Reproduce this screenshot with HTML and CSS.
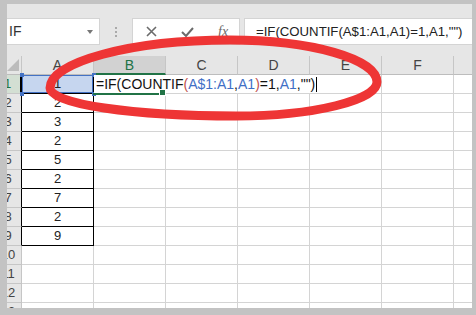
FILE: index.html
```html
<!DOCTYPE html>
<html lang="en">
<head>
    <meta charset="UTF-8">
    <meta name="viewport" content="width=device-width, initial-scale=1.0">
    <title>COUNTIF dedupe</title>
    <link rel="stylesheet" href="styles.css">
</head>
<body>
    <div class="window">
        <div class="toolbar">
            <div class="name-box">IF<span class="drop"></span></div>
            <div class="grip"><i></i><i></i><i></i></div>
            <div class="fx-buttons">
                <svg width="11" height="11" viewBox="0 0 11 11"><path d="M1 1 L10 10 M10 1 L1 10" stroke="#6b6b6b" stroke-width="1.6" fill="none"/></svg>
                <svg width="13" height="10" viewBox="0 0 13 10"><path d="M1 5 L5 9 L12 1" stroke="#6b6b6b" stroke-width="2" fill="none"/></svg>
                <span class="fx">fx</span>
            </div>
            <div class="formula-box">=IF(COUNTIF(A$1:A1,A1)=1,A1,"")</div>
        </div>

        <div class="sheet">
            <div class="row head">
                <div class="rh corner"><span class="tri"></span></div>
                <div class="ch">A</div>
                <div class="ch sel">B</div>
                <div class="ch">C</div>
                <div class="ch">D</div>
                <div class="ch">E</div>
                <div class="ch">F</div>
                <div class="ch">G</div>
            </div>
            <div class="row box">
                <div class="rh sel">1</div>
                <div class="c a a1">1<i class="h tl"></i><i class="h tr"></i><i class="h bl"></i><i class="h br"></i></div>
                <div class="c b1"><span class="edit">=IF(COUNTIF<span class="p">(</span><span class="r">A$1:A1</span>,<span class="r">A1</span><span class="p">)</span>=1,<span class="r">A1</span>,"")<i class="caret"></i></span></div>
                <div class="c"></div><div class="c"></div><div class="c"></div><div class="c"></div><div class="c"></div>
            </div>
            <div class="row box"><div class="rh">2</div><div class="c a">2</div><div class="c"></div><div class="c"></div><div class="c"></div><div class="c"></div><div class="c"></div><div class="c"></div></div>
            <div class="row box"><div class="rh">3</div><div class="c a">3</div><div class="c"></div><div class="c"></div><div class="c"></div><div class="c"></div><div class="c"></div><div class="c"></div></div>
            <div class="row box"><div class="rh">4</div><div class="c a">2</div><div class="c"></div><div class="c"></div><div class="c"></div><div class="c"></div><div class="c"></div><div class="c"></div></div>
            <div class="row box"><div class="rh">5</div><div class="c a">5</div><div class="c"></div><div class="c"></div><div class="c"></div><div class="c"></div><div class="c"></div><div class="c"></div></div>
            <div class="row box"><div class="rh">6</div><div class="c a">2</div><div class="c"></div><div class="c"></div><div class="c"></div><div class="c"></div><div class="c"></div><div class="c"></div></div>
            <div class="row box"><div class="rh">7</div><div class="c a">7</div><div class="c"></div><div class="c"></div><div class="c"></div><div class="c"></div><div class="c"></div><div class="c"></div></div>
            <div class="row box"><div class="rh">8</div><div class="c a">2</div><div class="c"></div><div class="c"></div><div class="c"></div><div class="c"></div><div class="c"></div><div class="c"></div></div>
            <div class="row box"><div class="rh">9</div><div class="c a">9</div><div class="c"></div><div class="c"></div><div class="c"></div><div class="c"></div><div class="c"></div><div class="c"></div></div>
            <div class="row"><div class="rh">10</div><div class="c"></div><div class="c"></div><div class="c"></div><div class="c"></div><div class="c"></div><div class="c"></div><div class="c"></div></div>
            <div class="row"><div class="rh">11</div><div class="c"></div><div class="c"></div><div class="c"></div><div class="c"></div><div class="c"></div><div class="c"></div><div class="c"></div></div>
            <div class="row"><div class="rh">12</div><div class="c"></div><div class="c"></div><div class="c"></div><div class="c"></div><div class="c"></div><div class="c"></div><div class="c"></div></div>
            <div class="row"><div class="rh">13</div><div class="c"></div><div class="c"></div><div class="c"></div><div class="c"></div><div class="c"></div><div class="c"></div><div class="c"></div></div>
        </div>
    </div>

    <!-- hand drawn marker around the formula -->
    <svg class="mark" width="476" height="315" viewBox="0 0 476 315">
        <path d="M50 88 C50 62 131 40 230 40 C311 40 377 59 377 82 C377 100 314 116 236 116 C133 116 50 104 50 88 Z" fill="none" stroke="#ee3535" stroke-width="9"/>
    </svg>
</body>
</html>
```

FILE: styles.css
```css
body {
    margin: 0;
    width: 476px;
    height: 315px;
    background-color: #c3c3c3;
    font-family: "Liberation Sans", Arial, sans-serif;
    color: #222;
    overflow: hidden;
    position: relative;
}

.window {
    margin: 4px 4px 0 7px;
    height: 304px;
    background-color: #fff;
    overflow: hidden;
}

/* formula bar */
.toolbar {
    height: 52px;
    background-color: #e6e6e6;
    display: flex;
    align-items: flex-start;
    padding-top: 14px;
    box-sizing: border-box;
}

.name-box {
    margin-left: -15px;
    width: 108px;
    height: 27px;
    padding-left: 16px;
    box-sizing: border-box;
    background-color: #fff;
    border: 1px solid #d4d4d4;
    font-size: 14px;
    line-height: 25px;
    color: #333;
    position: relative;
}

.drop {
    position: absolute;
    right: 6px;
    top: 11px;
    border-left: 3px solid transparent;
    border-right: 3px solid transparent;
    border-top: 4px solid #777;
}

.grip {
    width: 32px;
    display: flex;
    flex-direction: column;
    align-items: center;
    gap: 2px;
    padding-top: 9px;
}

.grip i {
    width: 2px;
    height: 2px;
    background-color: #aaa;
}

.fx-buttons {
    width: 108px;
    height: 27px;
    box-sizing: border-box;
    background-color: #fff;
    border: 1px solid #d4d4d4;
    display: flex;
    align-items: center;
    gap: 24px;
    padding-left: 13px;
}

.fx {
    font-family: "Liberation Serif", serif;
    font-style: italic;
    font-size: 14px;
    color: #6b6b6b;
}

.formula-box {
    margin-left: 4px;
    flex: 1;
    height: 27px;
    box-sizing: border-box;
    background-color: #fff;
    border: 1px solid #d4d4d4;
    border-right: none;
    padding-left: 11px;
    font-size: 13.2px;
    line-height: 25px;
    color: #222;
    white-space: nowrap;
}

/* grid */
.sheet {
    margin-left: -12px;
}

.row {
    display: flex;
    height: 19px;
}

.rh, .ch, .c {
    box-sizing: border-box;
    flex: none;
    border-right: 1px solid #d4d4d4;
    border-bottom: 1px solid #d4d4d4;
}

.rh {
    width: 27px;
    background-color: #e6e6e6;
    border-right-color: #c6c6c6;
    border-bottom-color: #c6c6c6;
    font-size: 13px;
    line-height: 18px;
    text-align: center;
    color: #444;
}

.rh.sel {
    background-color: #d3dfd3;
    color: #217346;
    border-right: 2px solid #217346;
}

.corner {
    position: relative;
    border-bottom-color: #bdbdbd;
}

.tri {
    position: absolute;
    right: 2px;
    bottom: 3px;
    border-left: 12px solid transparent;
    border-bottom: 12px solid #bcbcbc;
}

.ch {
    width: 72px;
    background-color: #e6e6e6;
    border-right-color: #c6c6c6;
    border-bottom-color: #bdbdbd;
    font-size: 14px;
    line-height: 19px;
    text-align: center;
    color: #444;
}

.ch.sel {
    background-color: #d2d2d2;
    color: #217346;
    border-bottom: 2px solid #217346;
}

.c {
    width: 72px;
    font-size: 13px;
    line-height: 18px;
    text-align: center;
}

.box .rh {
    border-right-color: #000;
}

.c.a {
    border-right-color: #000;
    border-bottom-color: #000;
}

/* range referenced by the formula */
.a1 {
    position: relative;
    background-color: #c6d6ef;
    box-shadow: inset 0 0 0 1px #4472c4;
    border-right-color: #4472c4;
    border-bottom-color: #4472c4;
}

.h {
    position: absolute;
    width: 4px;
    height: 4px;
    background-color: #4472c4;
}

.tl { left: -2px; top: -2px; }
.tr { right: -3px; top: -2px; }
.bl { left: -2px; bottom: -3px; }
.br { right: -3px; bottom: -3px; }

/* cell being edited */
.b1 {
    position: relative;
    z-index: 1;
    text-align: left;
    overflow: visible;
}

.b1::after {
    content: "";
    position: absolute;
    left: -1px;
    top: -1px;
    width: 72px;
    height: 19px;
    border: 2px solid #217346;
    border-right: none;
    border-top: none;
    border-left: none;
}

.b1::before {
    content: "";
    position: absolute;
    right: -1px;
    bottom: -3px;
    width: 5px;
    height: 5px;
    background-color: #217346;
    border: 1px solid #fff;
    z-index: 2;
}

.edit {
    display: inline-block;
    position: relative;
    background-color: #fff;
    white-space: nowrap;
    font-size: 14px;
    line-height: 18px;
    height: 18px;
    padding: 0 6px 0 2px;
    color: #111;
}

.edit .r {
    color: #3f6fc6;
}

.edit .p {
    color: #c0504d;
}

.caret {
    display: inline-block;
    width: 1px;
    height: 15px;
    margin-left: 1px;
    background-color: #000;
    vertical-align: -3px;
}

.mark {
    position: absolute;
    left: 0;
    top: 0;
    pointer-events: none;
}
```
